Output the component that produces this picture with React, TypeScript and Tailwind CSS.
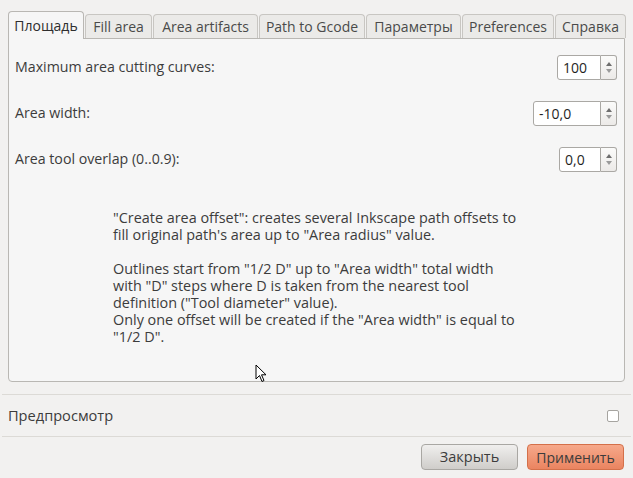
import React from "react";

const tabs = ["Площадь", "Fill area", "Area artifacts", "Path to Gcode", "Параметры", "Preferences", "Справка"];

const tabWidths = ["w-[76px]", "w-[67px]", "w-[105px]", "w-[106px]", "w-[95px]", "w-[92px]", "w-[71px]"];

function SpinBox({ value, width }: { value: string; width: string }) {
  return (
    <div className="flex h-[25px]">
      <div
        className={`${width} h-full flex items-center pl-[5px] bg-white border border-[#aaa8a4] rounded-l-[3px] text-[14px] text-[#1f1f1f]`}
      >
        {value}
      </div>
      <div className="w-[16px] h-full flex flex-col items-center justify-center gap-[3px] border border-l-0 border-[#aaa8a4] rounded-r-[3px] bg-gradient-to-b from-[#fbfbfa] to-[#eceae8]">
        <svg width="6" height="4" viewBox="0 0 6 4">
          <path d="M0 4 L3 0 L6 4 Z" fill="#6e6e6e" />
        </svg>
        <svg width="6" height="4" viewBox="0 0 6 4">
          <path d="M0 0 L3 4 L6 0 Z" fill="#9a9a9a" />
        </svg>
      </div>
    </div>
  );
}

function Row({ label, value, width }: { label: string; value: string; width: string }) {
  return (
    <div className="h-[46px] flex items-center justify-between">
      <span className="text-[14.2px]">{label}</span>
      <SpinBox value={value} width={width} />
    </div>
  );
}

export default function App() {
  return (
    <div
      className="relative w-[633px] h-[478px] bg-[#f2f1f0] text-[#3c3c3c] text-[14px] overflow-hidden"
      style={{ fontFamily: '"Open Sans", "Noto Sans", sans-serif' }}
    >
      {/* Tabs */}
      <div className="flex items-end h-[38px] pt-[10px] pl-[8px] gap-[1px]">
        {tabs.map((t, i) =>
          i === 0 ? (
            <div
              key={t}
              className={`${tabWidths[i]} h-[28px] -mb-[1px] z-10 flex items-center justify-center bg-[#f6f6f6] border border-b-0 border-[#b9b7b3] rounded-t-[4px] text-[#2e2e2e]`}
            >
              {t}
            </div>
          ) : (
            <div
              key={t}
              className={`${tabWidths[i]} h-[24px] flex items-center justify-center bg-[#ebeae8] border border-b-0 border-[#c8c6c2] rounded-t-[4px] text-[#4a4a4a]`}
            >
              {t}
            </div>
          )
        )}
      </div>

      {/* Panel */}
      <div className="mx-[8px] h-[344px] bg-[#f6f6f6] border border-[#b9b7b3] rounded-b-[4px] pt-[5px] pl-[6px] pr-[7px]">
        <Row label="Maximum area cutting curves:" value="100" width="w-[44px]" />
        <Row label="Area width:" value="-10,0" width="w-[68px]" />
        <Row label="Area tool overlap (0..0.9):" value="0,0" width="w-[42px]" />

        <div className="mt-[27px] pl-[98px] text-[14.4px] leading-[17px] text-[#3c3c3c]">
          <p>"Create area offset": creates several Inkscape path offsets to</p>
          <p>fill original path's area up to "Area radius" value.</p>
          <p className="mt-[17px]">Outlines start from "1/2 D" up to "Area width" total width</p>
          <p>with "D" steps where D is taken from the nearest tool</p>
          <p>definition ("Tool diameter" value).</p>
          <p>Only one offset will be created if the "Area width" is equal to</p>
          <p>"1/2 D".</p>
        </div>
      </div>

      {/* Preview */}
      <div className="mt-[12px] mx-[2px] border-t border-[#dcdad6]" />
      <div className="h-[41px] flex items-center justify-between pl-[8px] pr-[14px]">
        <span className="text-[14.6px]">Предпросмотр</span>
        <div className="w-[12px] h-[12px] bg-white border border-[#a6a4a0] rounded-[2px]" />
      </div>
      <div className="mx-[2px] border-t border-[#dcdad6]" />

      {/* Buttons */}
      <div className="flex justify-end gap-[9px] pt-[7px] pr-[9px]">
        <button className="w-[97px] h-[26px] rounded-[4px] border border-[#a9a7a3] bg-gradient-to-b from-[#f0efee] to-[#cfcdca] text-[#3c3c3c] text-[14.5px]">
          Закрыть
        </button>
        <button className="w-[97px] h-[26px] rounded-[4px] border border-[#d4704a] bg-gradient-to-b from-[#f6a98b] to-[#ea8460] text-[#3c3c3c] text-[14px]">
          Применить
        </button>
      </div>

      {/* Mouse pointer */}
      <svg className="absolute left-[255px] top-[364px]" width="13" height="20" viewBox="0 0 13 20">
        <path d="M1 1 L1 15 L4.5 11.5 L7 17.5 L9 16.5 L6.5 10.8 L11 10.8 Z" fill="white" stroke="black" strokeWidth="1" strokeLinejoin="round" />
      </svg>
    </div>
  );
}
